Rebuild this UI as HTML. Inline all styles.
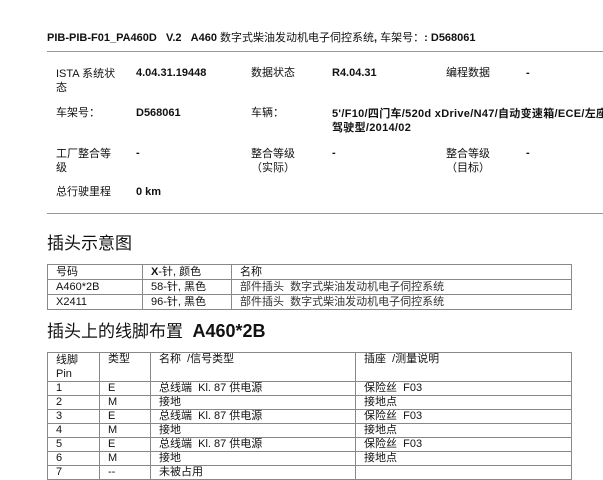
<!DOCTYPE html>
<html><head><meta charset="utf-8"><style>
body{margin:0;width:603px;height:480px;overflow:hidden;background:#fff;font-family:"Liberation Sans","Noto Sans CJK SC",sans-serif;color:#111;font-size:11px}
.a{position:absolute;white-space:nowrap;line-height:13px}
.b{font-weight:bold}
.hr{position:absolute;left:47px;right:0;height:1px;background:#999}
table{position:absolute;border-collapse:collapse;font-size:11px;left:47px;width:525px;table-layout:fixed}
td{border:1px solid #888;padding:0 0 0 8px;line-height:13px;vertical-align:top;white-space:nowrap;overflow:hidden}
#t1 td{line-height:14px}
td.g{color:#333}
</style></head><body>
<div class="a b" style="left:47px;top:32px">PIB-PIB-F01_PA460D&nbsp;&nbsp;&nbsp;V.2&nbsp;&nbsp;&nbsp;A460 <span style="font-weight:normal">数字式柴油发动机电子伺控系统</span>, <span style="font-weight:normal">车架号：</span>: D568061</div>
<div class="hr" style="top:51px"></div>
<div class="a" style="left:56px;top:67px;line-height:14px">ISTA 系统状<br>态</div>
<div class="a b" style="left:136px;top:67px">4.04.31.19448</div>
<div class="a" style="left:251px;top:67px">数据状态</div>
<div class="a b" style="left:332px;top:67px">R4.04.31</div>
<div class="a" style="left:446px;top:67px">编程数据</div>
<div class="a b" style="left:526px;top:67px">-</div>
<div class="a" style="left:56px;top:107px">车架号：</div>
<div class="a b" style="left:136px;top:107px">D568061</div>
<div class="a" style="left:251px;top:107px">车辆：</div>
<div class="a b" style="left:332px;top:107px;line-height:14px;letter-spacing:0.3px">5'/F10/四门车/520d xDrive/N47/自动变速箱/ECE/左座<br>驾驶型/2014/02</div>
<div class="a" style="left:56px;top:147px;line-height:14px">工厂整合等<br>级</div>
<div class="a b" style="left:136px;top:147px">-</div>
<div class="a" style="left:251px;top:147px;line-height:14px">整合等级<br>（实际）</div>
<div class="a b" style="left:332px;top:147px">-</div>
<div class="a" style="left:446px;top:147px;line-height:14px">整合等级<br>（目标）</div>
<div class="a b" style="left:526px;top:147px">-</div>
<div class="a" style="left:56px;top:186px">总行驶里程</div>
<div class="a b" style="left:136px;top:186px">0 km</div>
<div class="hr" style="top:213px"></div>
<div class="a" style="left:47px;top:234px;font-size:17px;line-height:20px">插头示意图</div>
<table id="t1" style="top:264px">
<col style="width:95px"><col style="width:89px"><col>
<tr><td>号码</td><td><b>X</b>-针, 颜色</td><td>名称</td></tr>
<tr><td>A460*2B</td><td>58-针, 黑色</td><td class="g">部件插头&nbsp; 数字式柴油发动机电子伺控系统</td></tr>
<tr><td>X2411</td><td>96-针, 黑色</td><td class="g">部件插头&nbsp; 数字式柴油发动机电子伺控系统</td></tr>
</table>
<div class="a" style="left:47px;top:320px;font-size:17px;line-height:22px">插头上的线脚布置&nbsp; <b style="font-size:18px">A460*2B</b></div>
<table style="top:352px">
<col style="width:52px"><col style="width:51px"><col style="width:205px"><col>
<tr><td style="height:27px;line-height:14px">线脚<br>Pin</td><td>类型</td><td>名称&nbsp; /信号类型</td><td>插座&nbsp; /测量说明</td></tr>
<tr><td>1</td><td>E</td><td>总线端&nbsp; Kl. 87 供电源</td><td>保险丝&nbsp; F03</td></tr>
<tr><td>2</td><td>M</td><td>接地</td><td>接地点</td></tr>
<tr><td>3</td><td>E</td><td>总线端&nbsp; Kl. 87 供电源</td><td>保险丝&nbsp; F03</td></tr>
<tr><td>4</td><td>M</td><td>接地</td><td>接地点</td></tr>
<tr><td>5</td><td>E</td><td>总线端&nbsp; Kl. 87 供电源</td><td>保险丝&nbsp; F03</td></tr>
<tr><td>6</td><td>M</td><td>接地</td><td>接地点</td></tr>
<tr><td>7</td><td>--</td><td>未被占用</td><td></td></tr>
</table>
</body></html>
